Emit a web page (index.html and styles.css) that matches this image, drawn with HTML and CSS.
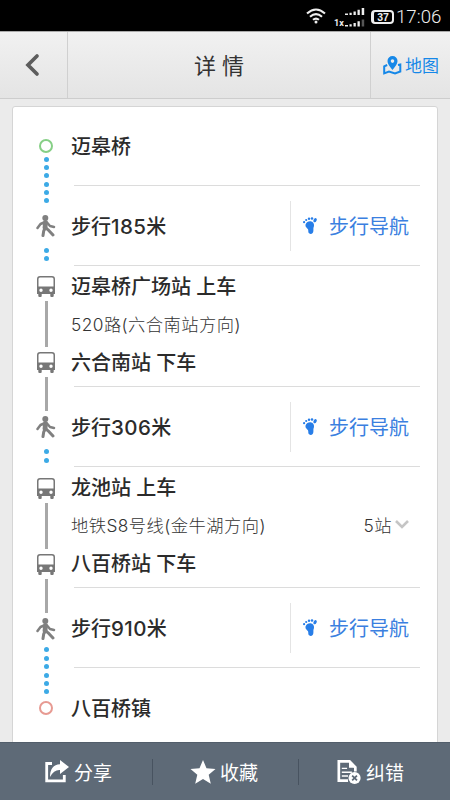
FILE: index.html
```
<!DOCTYPE html>
<html lang="zh-CN">
<head>
<meta charset="utf-8">
<title>详情</title>
<link rel="stylesheet" href="styles.css">
</head>
<body>
<svg class="defs" aria-hidden="true">
  <symbol id="walk" viewBox="0 0 20 22">
    <circle cx="9.3" cy="3" r="3"/>
    <path d="M9.5 7.5 9 13" stroke-width="4.8"/>
    <path d="M8 7.5 4.5 9 1.5 13M11 7.5 14 11 18 12" stroke-width="2.5"/>
    <path d="M9 13 7.7 16 7 20.5M10 13 13 15.7 17 20" stroke-width="3"/>
  </symbol>
  <symbol id="bus" viewBox="0 0 18 21">
    <path fill-rule="evenodd" d="M3 0H15Q18 0 18 3V18H16.7V20Q16.7 21 15.5 21H14.3Q13.3 21 13.3 20V18H4.7V20Q4.7 21 3.7 21H2.5Q1.3 21 1.3 20V18H0V3Q0 0 3 0ZM3 1.5Q1.5 1.5 1.5 3V10.5H16.5V3Q16.5 1.5 15 1.5ZM4 12.5A1.7 1.7 0 1 0 4 15.9 1.7 1.7 0 1 0 4 12.5ZM14 12.5A1.7 1.7 0 1 0 14 15.9 1.7 1.7 0 1 0 14 12.5Z"/>
  </symbol>
  <symbol id="foot" viewBox="0 0 14 17">
    <path d="M2.5 7.5Q4 4 7.5 4.2 11.4 4.8 11 9 10 11.2 10.4 13.5 10.3 16.8 7.6 16.9 5 16.6 5.3 13.8 5.5 12.2 3.8 11 1.9 9.3 2.5 7.5Z"/>
    <ellipse cx="12.1" cy="3.2" rx="1.5" ry="2.2" transform="rotate(25 12.1 3.2)"/>
    <circle cx="9" cy="1.5" r="1.3"/><circle cx="6" cy="1.7" r="1.2"/><circle cx="3.2" cy="3" r="1.1"/><circle cx="1.1" cy="5.2" r="1.1"/>
  </symbol>
</svg>
<div class="status">
  <svg class="wifi" viewBox="0 0 20 16"><path d="M1 5.5Q10-2.5 19 5.5M4 8.8Q10 3.5 16 8.8M7 11.8Q10 9.3 13 11.8"/><circle cx="10" cy="14" r="1.5"/></svg>
  <svg class="signal" viewBox="0 0 32 20"><path d="M11 6.5h3v1.5h-3zM15.5 5.8h2.2V8h-2.2zM19.5 4.5h2.3V8h-2.3zM23.5 2.8h2.3V8h-2.3zM27.7 1h2.5v7h-2.5zM11 18h3v1.5h-3zM15.5 17.3h2.2v2.2h-2.2zM19.5 16h2.3v3.5h-2.3zM23.5 14.3h2.3v5.2h-2.3z"/><path class="weak" d="M27.7 12.5h2.5v7h-2.5z"/><text x="0" y="19">1x</text></svg>
  <div class="battery">37</div>
  <div class="clock">17:06</div>
</div>
<header class="header">
  <div class="back"><svg viewBox="0 0 14 22"><path d="M12 2 3 11 12 20"/></svg></div>
  <h1>详 情</h1>
  <div class="map">
    <svg viewBox="0 0 19 19"><path class="sheet" d="M4.2 9 1.2 10.3V17.4L6 15.5 12 17.5 17.3 15.5V8.5L15 9"/><path class="pin" fill-rule="evenodd" d="M9.5 0A5 5 0 0 1 14.5 5C14.5 8.5 9.5 14 9.5 14S4.5 8.5 4.5 5A5 5 0 0 1 9.5 0ZM9.5 3.3A1.8 1.8 0 1 0 9.5 6.9 1.8 1.8 0 1 0 9.5 3.3Z"/></svg>
    <span>地图</span>
  </div>
</header>
<main class="page">
  <section class="card">
    <div class="rail">
      <i class="end start"></i>
      <div class="dots"><i></i><i></i><i></i><i></i><i></i><i></i></div>
      <svg class="walk"><use href="#walk"/></svg>
      <div class="dots two"><i></i><i></i></div>
      <svg class="bus"><use href="#bus"/></svg>
      <i class="line"></i>
      <svg class="bus"><use href="#bus"/></svg>
      <i class="line short"></i>
      <svg class="walk"><use href="#walk"/></svg>
      <div class="dots two"><i></i><i></i></div>
      <svg class="bus"><use href="#bus"/></svg>
      <i class="line"></i>
      <svg class="bus"><use href="#bus"/></svg>
      <i class="line short"></i>
      <svg class="walk"><use href="#walk"/></svg>
      <div class="dots last"><i></i><i></i><i></i><i></i><i></i><i></i></div>
      <i class="end finish"></i>
    </div>
    <div class="steps">
      <div class="step first"><b>迈皋桥</b></div>
      <div class="step"><b>步行<span class="num">185</span>米</b><a class="nav"><svg><use href="#foot"/></svg>步行导航</a></div>
      <div class="ride">
        <b>迈皋桥广场站 上车</b>
        <div class="route"><span>520路(六合南站方向)</span></div>
        <b>六合南站 下车</b>
      </div>
      <div class="step"><b>步行<span class="num">306</span>米</b><a class="nav"><svg><use href="#foot"/></svg>步行导航</a></div>
      <div class="ride">
        <b>龙池站 上车</b>
        <div class="route"><span>地铁S8号线(金牛湖方向)</span><span class="stops">5站<svg viewBox="0 0 14 9"><path d="M1 1 7 7 13 1"/></svg></span></div>
        <b>八百桥站 下车</b>
      </div>
      <div class="step"><b>步行<span class="num">910</span>米</b><a class="nav"><svg><use href="#foot"/></svg>步行导航</a></div>
      <div class="step final"><b>八百桥镇</b></div>
    </div>
  </section>
</main>
<footer class="toolbar">
  <div class="tool"><svg viewBox="0 0 24 24"><path class="stroke" d="M7 3.5H1.7V20.8H19.3V15"/><path d="M15 0 24 7 15 14V10Q9 9.5 5 17 5 5 15 4.3Z"/></svg>分享</div>
  <div class="tool"><svg viewBox="0 0 24 24"><path d="M12 0 15.5 8.2 24.5 9 17.7 14.8 19.8 23.7 12 19 4.2 23.7 6.3 14.8-.5 9 8.5 8.2Z"/></svg>收藏</div>
  <div class="tool"><svg viewBox="0 0 24 25"><path class="stroke" d="M11 21.5H1.4V1.4H12.5L18.6 7.5V12"/><path d="M12 1V8H19ZM4.5 8H10V9.5H4.5ZM4.5 12H15V13.5H4.5ZM4.5 16H11V17.5H4.5Z"/><circle cx="17.8" cy="18.7" r="6.3"/><path class="cross" d="M15.3 16.2 20.3 21.2M20.3 16.2 15.3 21.2"/></svg>纠错</div>
</footer>
</body>
</html>
```
FILE: styles.css
```
* { box-sizing: border-box; }
body {
  margin: 0;
  height: 800px;
  overflow: hidden;
  display: flex;
  flex-direction: column;
  background: #ebebeb;
  color: #2b2b2b;
  font-family: Inter, "Noto Sans CJK SC", sans-serif;
}
svg { display: block; flex: none; overflow: visible; }
.defs { position: absolute; width: 0; height: 0; }

.status {
  flex: none;
  height: 31px;
  background: #000;
  color: #eee;
  display: flex;
  align-items: center;
  padding: 2px 7px 0 306px;
}
.wifi { width: 20px; height: 16px; fill: #eee; margin-top: -2px; }
.wifi path { fill: none; stroke: #eee; stroke-width: 2.1; }
.signal { width: 32px; height: 20px; margin-left: 8px; fill: #eee; }
.signal text { font: bold 9px Roboto, sans-serif; }
.signal .weak { fill: #555; }
.battery {
  width: 23px;
  height: 14px;
  margin-left: 5px;
  border: 2px solid #eee;
  border-left-width: 3px;
  border-radius: 4px;
  font: bold 10.5px/10px "Liberation Sans", sans-serif;
  text-align: center;
}
.clock { margin-left: 2px; font: 300 18.7px/28px Roboto, sans-serif; white-space: nowrap; }

.header {
  flex: none;
  height: 68px;
  display: flex;
  align-items: center;
  background: linear-gradient(#f1f1f1, #e4e4e4);
  border-top: 1px solid #aaa;
  border-bottom: 1px solid #cdcdcd;
}
.back { width: 68px; height: 100%; border-right: 1px solid #d0d0d0; display: flex; align-items: center; padding-left: 25px; }
.back svg { width: 14px; height: 22px; }
.back path { fill: none; stroke: #5d5d5d; stroke-width: 3.7; stroke-linecap: round; }
.header h1 { flex: 1; margin: 0; padding-bottom: 2px; text-align: center; font-size: 22px; font-weight: 400; color: #333; }
.map { width: 80px; height: 100%; border-left: 1px solid #d0d0d0; display: flex; align-items: center; gap: 3px; padding-left: 12px; color: #1688e8; font-size: 17px; white-space: nowrap; }
.map span { padding-bottom: 1px; }
.map svg { width: 19px; height: 19px; }
.map .pin { fill: #1688e8; }
.map .sheet { fill: none; stroke: #1688e8; stroke-width: 2; }

.page { flex: 1; min-height: 0; padding: 7px 12px 0; overflow: hidden; }
.card { height: 660px; border: 1px solid #d5d5d5; border-radius: 3px 3px 0 0; background: #fff; display: flex; }
.rail { width: 58px; padding: 32px 0 0 8px; display: flex; flex-direction: column; align-items: center; flex: none; }
.end { width: 14px; height: 14px; border: 2px solid #86cf86; border-radius: 50%; flex: none; }
.end.finish { border-color: #e79a92; margin-top: 7px; }
.dots { display: flex; flex-direction: column; gap: 3.4px; margin: 3.5px 0 11.5px; }
.dots i { width: 5px; height: 5px; border-radius: 50%; background: #3caae6; }
.dots.two { margin: 11px 0 15.1px; }
.dots.last { margin: 7.5px 0 0; }
.walk { width: 20px; height: 22px; fill: #808080; stroke: #808080; stroke-width: 0; stroke-linecap: round; stroke-linejoin: round; }
#walk path { fill: none; }
.bus { width: 18px; height: 21px; fill: #777; }
.line { width: 3px; height: 46px; background: #a8a8a8; margin: 4px 0 5px; flex: none; }
.line.short { height: 34px; }

.steps { flex: 1; min-width: 0; padding-right: 17px; }
.steps b { display: block; font-size: 20px; line-height: 28px; font-weight: 500; white-space: nowrap; }
.num { font-size: 20.5px; letter-spacing: .4px; }
.step, .ride { background: linear-gradient(#dcdcdc, #dcdcdc) 3px 100% / 100% 1px no-repeat; }
.step { height: 80px; padding-top: 1px; display: flex; align-items: center; justify-content: space-between; }
.step.first { height: 79px; }
.step.final { background: none; padding-top: 2px; }
.ride { height: 121px; padding-top: 7px; }
.nav { width: 130px; height: 50px; margin-top: -1px; border-left: 1px solid #e4e4e4; display: flex; align-items: center; padding: 0 0 2px 12px; gap: 12px; color: #3b7fe0; font-size: 20px; white-space: nowrap; }
.nav svg { width: 14px; height: 17px; fill: #287ee8; }
.route { height: 48px; padding-bottom: 4px; display: flex; align-items: center; justify-content: space-between; font-size: 17.3px; letter-spacing: .45px; font-weight: 300; color: #333; white-space: nowrap; }
.stops { display: flex; align-items: center; gap: 3px; padding-right: 11px; }
.stops svg { width: 14px; height: 9px; }
.stops path { fill: none; stroke: #c5c5c5; stroke-width: 2.6; }

.toolbar { flex: none; height: 58px; background: #5e6a77; border-top: 1px solid #525e6b; display: flex; align-items: center; color: #fff; font-size: 19px; }
.tool { height: 26px; display: flex; align-items: center; gap: 5px; padding-left: 45px; width: 152px; white-space: nowrap; }
.tool + .tool { border-left: 1px solid #485360; width: 146px; padding-left: 38px; }
.tool:last-child { width: 152px; padding-left: 38px; }
.tool svg { width: 24px; height: 24px; fill: #fff; }
.tool .stroke { fill: none; stroke: #fff; stroke-width: 2.8; }
.tool .cross { fill: none; stroke: #5e6a77; stroke-width: 1.8; }
```
